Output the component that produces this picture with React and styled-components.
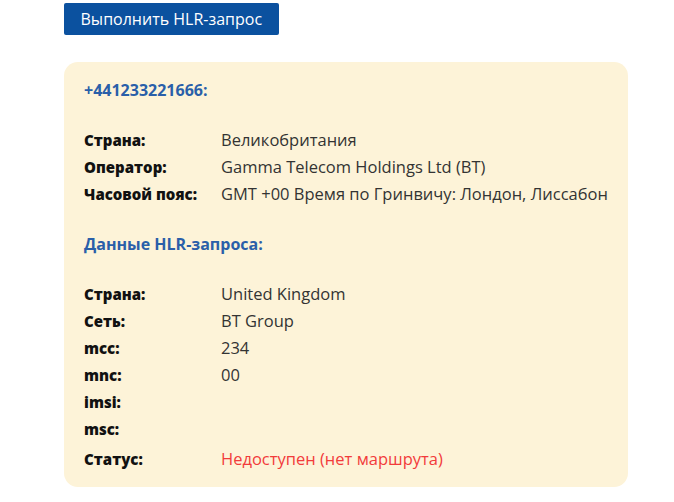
import React from "react";
import styled, { createGlobalStyle } from "styled-components";

const GlobalStyle = createGlobalStyle`
  body {
    margin: 0;
    background: #ffffff;
    font-family: "Open Sans", "Noto Sans", sans-serif;
  }
`;

const operatorRows = [
  ["Страна:", "Великобритания"],
  ["Оператор:", "Gamma Telecom Holdings Ltd (BT)"],
  ["Часовой пояс:", "GMT +00 Время по Гринвичу: Лондон, Лиссабон"],
];

const hlrRows = [
  ["Страна:", "United Kingdom"],
  ["Сеть:", "BT Group"],
  ["mcc:", "234"],
  ["mnc:", "00"],
  ["imsi:", ""],
  ["msc:", ""],
];

const App = () => {
  return (
    <Page>
      <GlobalStyle />
      <Button>Выполнить HLR-запрос</Button>
      <Card>
        <Title>+441233221666:</Title>
        <Table>
          {operatorRows.map(([label, value]) => (
            <Row key={label}>
              <Label>{label}</Label>
              <Value>{value}</Value>
            </Row>
          ))}
        </Table>
        <Title>Данные HLR-запроса:</Title>
        <Table>
          {hlrRows.map(([label, value]) => (
            <Row key={label}>
              <Label>{label}</Label>
              <Value>{value}</Value>
            </Row>
          ))}
          <Row $status>
            <Label>Статус:</Label>
            <Value $error>Недоступен (нет маршрута)</Value>
          </Row>
        </Table>
      </Card>
    </Page>
  );
};

export default App;

const Page = styled.div`
  padding: 3px 46px 15px 64px;
  display: flex;
  flex-direction: column;
  align-items: flex-start;
`;

const Button = styled.button`
  height: 32px;
  padding: 0 16.5px;
  background-color: #0b519f;
  color: #ffffff;
  border: none;
  border-radius: 2px;
  font-family: "Open Sans", "Noto Sans", sans-serif;
  font-size: 16px;
  cursor: pointer;
`;

const Card = styled.div`
  align-self: stretch;
  margin-top: 27px;
  background-color: #fdf3d8;
  border-radius: 14px;
  padding: 18px 20px 15px 20px;
`;

const Title = styled.div`
  color: #2a5fa9;
  font-weight: 700;
  font-size: 16px;
  line-height: 20px;
`;

const Table = styled.div`
  margin: 26px 0 27px;
  display: flex;
  flex-direction: column;
  &:last-child {
    margin-bottom: 0;
  }
`;

const Row = styled.div`
  display: grid;
  grid-template-columns: 137px 1fr;
  height: 27px;
  align-items: center;
  margin-top: ${(p) => (p.$status ? "3px" : "0")};
`;

const Label = styled.div`
  font-weight: 800;
  font-size: 15px;
  color: #111111;
`;

const Value = styled.div`
  font-size: 16.5px;
  color: ${(p) => (p.$error ? "#f23b3b" : "#333333")};
`;
